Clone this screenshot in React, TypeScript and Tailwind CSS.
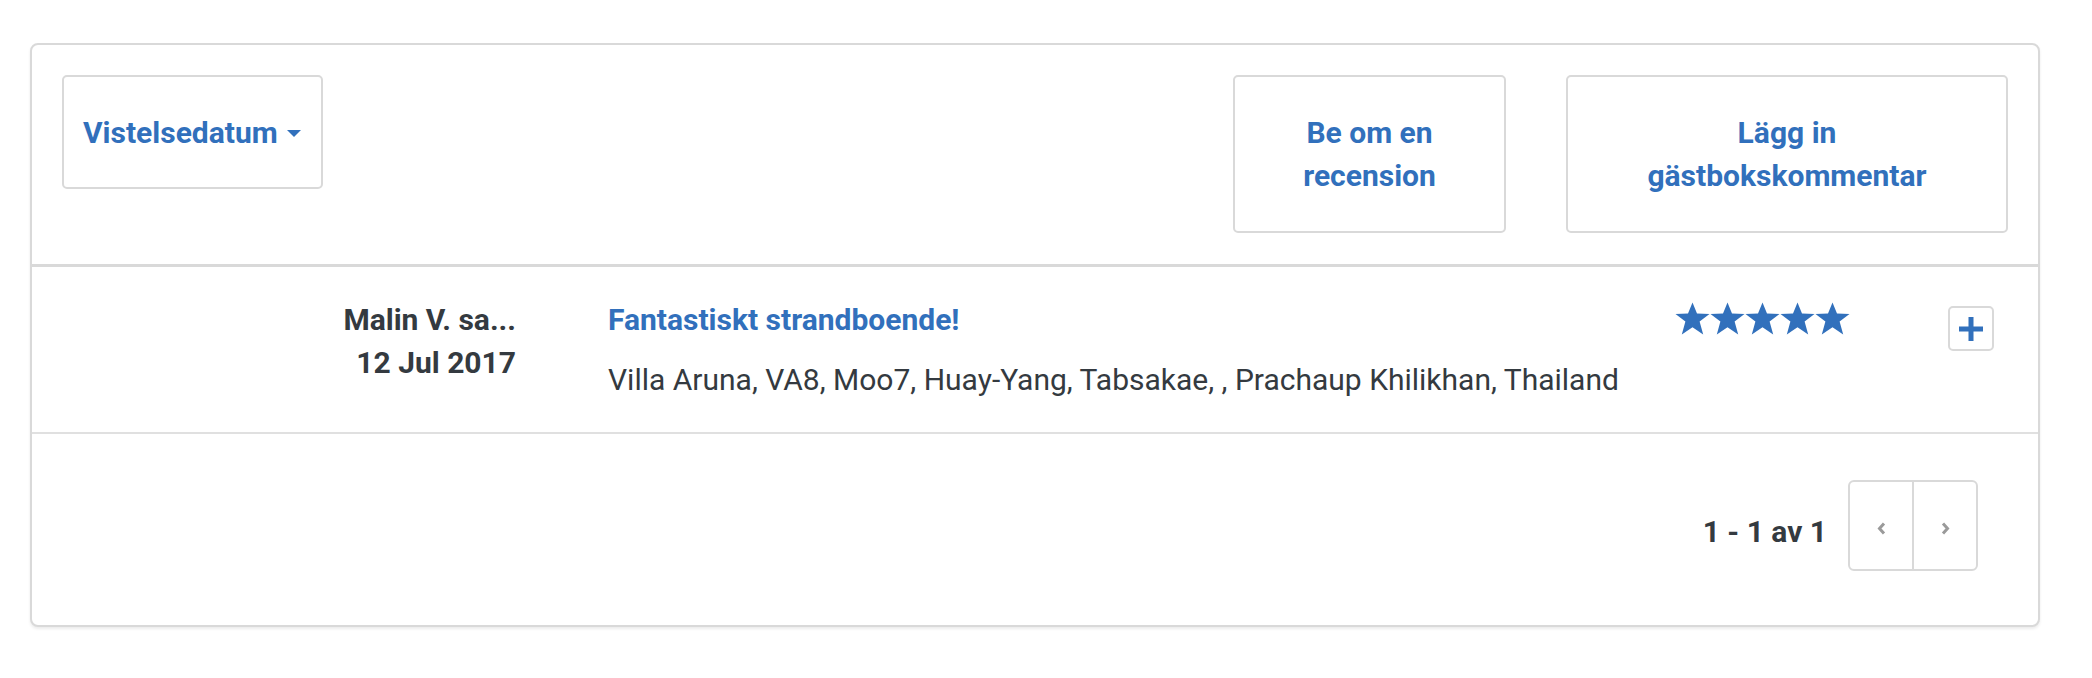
import React from "react";

const BLUE = "#3170bc";

function Star() {
  return (
    <svg width="35" height="33" viewBox="0 0 35 33" className="block">
      <polygon
        points="17.5,0.5 22,11.6 34.5,11.9 24.6,19.6 28.2,32.5 17.5,25.2 6.8,32.5 10.4,19.6 0.5,11.9 13,11.6"
        fill={BLUE}
      />
    </svg>
  );
}

export default function App() {
  return (
    <div
      className="bg-white w-[2092px] h-[678px] pt-[43px] pl-[30px]"
      style={{ fontFamily: "Roboto, 'Liberation Sans', sans-serif" }}
    >
      <div className="w-[2010px] border-2 border-[#d9d9d9] rounded-[8px] shadow-[0_2px_3px_rgba(0,0,0,0.08)] bg-white">
        {/* Header */}
        <div className="flex justify-between items-start px-[30px] pt-[30px] pb-[31px] border-b-[3px] border-[#d9d9d9]">
          <button className="h-[114px] w-[261px] border-2 border-[#d9d9d9] rounded-[5px] flex items-center pl-[19px] text-[30px] leading-[43px] font-bold text-[#3170bc]">
            <span>Vistelsedatum</span>
            <svg width="14" height="7" viewBox="0 0 14 7" className="ml-[9px] mt-[2px]">
              <polygon points="0,0 14,0 7,7" fill={BLUE} />
            </svg>
          </button>
          <div className="flex gap-[60px]">
            <button className="h-[158px] w-[273px] border-2 border-[#d9d9d9] rounded-[5px] px-[60px] text-center text-[30px] leading-[43px] font-bold text-[#3170bc]">
              Be om en recension
            </button>
            <button className="h-[158px] w-[442px] border-2 border-[#d9d9d9] rounded-[5px] px-[60px] text-center text-[30px] leading-[43px] font-bold text-[#3170bc]">
              Lägg in gästbokskommentar
            </button>
          </div>
        </div>

        {/* Review row */}
        <div className="flex items-start pl-[30px] pr-[44px] pt-[31px] pb-[31px] border-b-2 border-[#e0e0e0]">
          <div className="w-[454px] text-right text-[30px] leading-[43px] font-bold text-[#343a40]">
            <div>Malin V. sa...</div>
            <div>12 Jul 2017</div>
          </div>
          <div className="ml-[92px] flex-1">
            <div className="text-[30px] leading-[43px] font-bold text-[#3170bc]">
              Fantastiskt strandboende!
            </div>
            <div className="mt-[17px] text-[30px] leading-[43px] text-[#343a40]">
              Villa Aruna, VA8, Moo7, Huay-Yang, Tabsakae, , Prachaup Khilikhan, Thailand
            </div>
          </div>
          <div className="flex mt-[4px]">
            <Star />
            <Star />
            <Star />
            <Star />
            <Star />
          </div>
          <button className="ml-[98px] mt-[8px] w-[46px] h-[45px] border-2 border-[#d9d9d9] rounded-[5px] flex items-center justify-center">
            <svg width="24" height="24" viewBox="0 0 24 24">
              <rect x="0" y="9.5" width="24" height="5" fill={BLUE} />
              <rect x="9.5" y="0" width="5" height="24" fill={BLUE} />
            </svg>
          </button>
        </div>

        {/* Footer */}
        <div className="h-[191px] flex justify-end items-start pt-[46px] pr-[60px]">
          <div className="mt-[30px] mr-[21px] text-[30px] leading-[43px] font-bold text-[#343a40]">
            1 - 1 av 1
          </div>
          <div className="flex h-[91px] w-[130px] border-2 border-[#d9d9d9] rounded-[6px]">
            <div className="flex-1 flex items-center justify-center border-r-2 border-[#d9d9d9]">
              <svg width="9" height="13" viewBox="0 0 9 13" className="mt-[6px]">
                <polyline points="7,1.5 2.5,6.5 7,11.5" fill="none" stroke="#9a9a9a" strokeWidth="3" />
              </svg>
            </div>
            <div className="flex-1 flex items-center justify-center">
              <svg width="9" height="13" viewBox="0 0 9 13" className="mt-[6px]">
                <polyline points="2,1.5 6.5,6.5 2,11.5" fill="none" stroke="#9a9a9a" strokeWidth="3" />
              </svg>
            </div>
          </div>
        </div>
      </div>
    </div>
  );
}
